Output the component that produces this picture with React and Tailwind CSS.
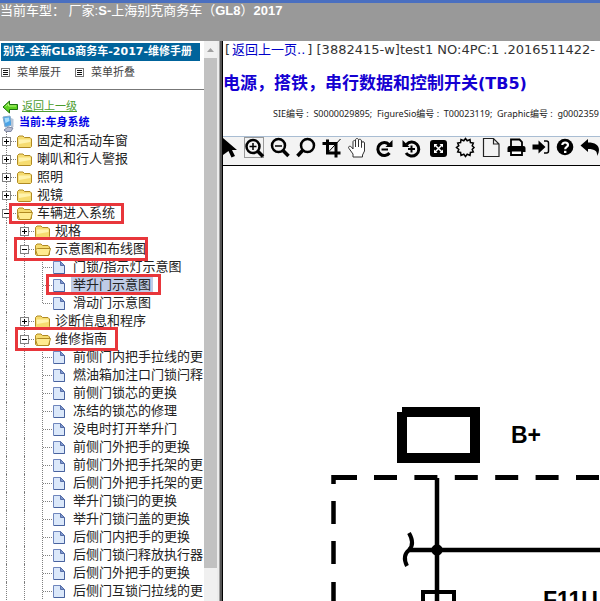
import { useState } from 'react'

const repairs = [
  '前侧门内把手拉线的更',
  '燃油箱加注口门锁闩释',
  '前侧门锁芯的更换',
  '冻结的锁芯的修理',
  '没电时打开举升门',
  '前侧门外把手的更换',
  '前侧门外把手托架的更',
  '后侧门外把手托架的更',
  '举升门锁闩的更换',
  '举升门锁闩盖的更换',
  '后侧门内把手的更换',
  '后侧门锁闩释放执行器',
  '后侧门外把手的更换',
  '后侧门互锁闩拉线的更',
]

const tree = [
  { label: '固定和活动车窗', folder: true },
  { label: '喇叭和行人警报', folder: true },
  { label: '照明', folder: true },
  { label: '视镜', folder: true },
  {
    label: '车辆进入系统',
    folder: true,
    mark: '-top-px left-[9px] h-[21px] w-[115px]',
    children: [
      { label: '规格', folder: true },
      {
        label: '示意图和布线图',
        folder: true,
        mark: '-top-[3px] left-[14px] h-6 w-[134px]',
        children: [
          { label: '门锁/指示灯示意图' },
          { label: '举升门示意图', selected: true, mark: '-top-0.5 left-[46px] h-[21px] w-[115px]' },
          { label: '滑动门示意图', last: true },
        ],
      },
      { label: '诊断信息和程序', folder: true },
      {
        label: '维修指南',
        folder: true,
        mark: '-top-[3px] left-[15px] h-6 w-[103px]',
        children: repairs.map((label) => ({ label })),
      },
    ],
  },
]

function Joint({ folder, open, last }) {
  return (
    <svg width="17" height="18" viewBox="0 0 17 18" fill="none" shapeRendering="crispEdges">
      <path d={last ? 'M6.5 0V9' : 'M6.5 0V18'} stroke="#808080" strokeDasharray="1 1" />
      <path d="M7 9.5H17" stroke="#808080" strokeDasharray="1 1" />
      {folder && (
        <>
          <rect x="2.5" y="5.5" width="8" height="8" fill="#fff" stroke="#808080" />
          <path d={open ? 'M4 9.5H9' : 'M4 9.5H9M6.5 7V12'} stroke="#000" />
        </>
      )}
    </svg>
  )
}

function FolderIcon({ open }) {
  return (
    <svg width="16" height="18" viewBox="0 0 16 18" className="shrink-0">
      <path d="M.5 14.5V5.5L2 4H6L7.5 5.5H13L14.5 7V14.5L13.5 15.5H1.5Z" fill="#f6dc70" stroke="#b08a22" />
      {open ? (
        <path d="M.5 9.5L2.5 8.5H15.5L13.5 15.5H2.5Z" fill="#ffec90" stroke="#b08a22" />
      ) : (
        <path d="M1.5 7.5H13.5V10L2 12Z" fill="#fff3ad" />
      )}
    </svg>
  )
}

function PageIcon() {
  return (
    <svg width="16" height="18" viewBox="0 0 16 18" className="shrink-0">
      <path d="M.5 3.5H7.5L11.5 7.5V15.5H.5Z" fill="#dbe8fa" stroke="#6f86bd" />
      <path d="M7.5 3.5V7.5H11.5Z" fill="#7d97cf" stroke="#566ea8" />
      <path d="M1 15.5H11.5V8" fill="none" stroke="#49639f" />
    </svg>
  )
}

function TreeNode({ node, depth }) {
  const [open, setOpen] = useState(Boolean(node.children))

  return (
    <li>
      <div className="relative flex h-[18px] items-center whitespace-nowrap">
        {Array.from({ length: depth }, (_, i) => (
          <span key={i} className="ml-1.5 h-full w-3 shrink-0 border-l border-dotted border-[#808080]" />
        ))}
        {node.folder ? (
          <button className="shrink-0" aria-label={node.label} onClick={() => setOpen(!open)}>
            <Joint folder open={open && node.children} />
          </button>
        ) : (
          <span className="shrink-0">
            <Joint last={node.last} />
          </span>
        )}
        {node.folder ? <FolderIcon open={open && node.children} /> : <PageIcon />}
        <a
          href="#"
          className={
            node.selected
              ? 'ml-0.5 bg-[#bfcbe6] px-0.5 text-[13px] leading-4 text-[#222]'
              : 'ml-1 text-[13px] leading-4 text-[#222]'
          }
        >
          {node.label}
        </a>
        {node.mark && (
          <span className={`pointer-events-none absolute z-10 border-3 border-[#e8363b] ${node.mark}`} />
        )}
      </div>
      {open && node.children && (
        <ul>
          {node.children.map((child) => (
            <TreeNode key={child.label} node={child} depth={depth + 1} />
          ))}
        </ul>
      )}
    </li>
  )
}

function MenuIcon() {
  return (
    <svg width="10" height="10" viewBox="0 0 10 10" fill="none" shapeRendering="crispEdges">
      <rect x=".5" y=".5" width="8" height="8" stroke="#777" />
      <path d="M2 2.5H7M2 4.5H7M2 6.5H7" stroke="#111" />
    </svg>
  )
}

function Sidebar() {
  return (
    <aside className="flex w-[223px] shrink-0">
      <div className="min-w-0 flex-1 overflow-hidden bg-white">
        <h1 className="mt-0.5 mr-1 ml-px h-[18px] bg-[#00639b] pl-0.5 text-[11px] leading-[18px] font-bold whitespace-nowrap text-white">
          别克-全新GL8商务车-2017-维修手册
        </h1>
        <div className="flex h-[29px] items-center gap-3.5 border-b border-[#777] pb-1 pl-px text-[11px] text-[#444]">
          <button className="flex items-center gap-1.5">
            <MenuIcon />
            菜单展开
          </button>
          <button className="flex items-center gap-1.5">
            <MenuIcon />
            菜单折叠
          </button>
        </div>
        <a href="#" className="mt-[9px] flex h-4 items-center gap-1 pl-0.5 text-[11px] text-[#4c9c2e] underline">
          <svg width="16" height="14" viewBox="0 0 16 14">
            <path d="M1 7L7.5 1V4.5H15.5V9.5H7.5V13Z" fill="#5ed321" stroke="#1f7010" />
            <path d="M3.5 6.5L6.5 3.8V6H14" fill="none" stroke="#b4f57c" />
          </svg>
          返回上一级
        </a>
        <div className="flex h-[17px] items-center gap-0.5 pl-px text-[11px] font-bold text-[#0000e6]">
          <svg width="16" height="18" viewBox="0 0 16 18">
            <path d="M2 2L9 1L11 10L4 12Z" fill="#4aa3e6" stroke="#86a9c9" />
            <path d="M3.5 3L8 2.5L8.5 6L4.5 8Z" fill="#a7dcfb" />
            <path d="M10 3L12.5 4V12L10 13Z" fill="#b9c6d6" />
            <path d="M3 15L7 12L12 13L10 16.5H5Z" fill="#b7bdd0" stroke="#8089a5" />
          </svg>
          当前:车身系统
        </div>
        <ul>
          {tree.map((node) => (
            <TreeNode key={node.label} node={node} depth={0} />
          ))}
        </ul>
      </div>
      {/* Scrollbar and frame edge */}
      <div className="flex w-[13px] flex-col items-center bg-[#f0f0f0]">
        <svg width="13" height="17" viewBox="0 0 13 17">
          <path d="M3 11L6.5 7L10 11Z" fill="#a0a0a0" />
        </svg>
        <div className="h-[510px] w-full bg-[#c1c1c1]" />
      </div>
      <div className="w-[3px] border-r border-[#a0a0a0] bg-[#ececec]" />
      <div className="w-0.5 bg-[#555]" />
      <div className="w-px bg-black" />
    </aside>
  )
}

const tools = [
  {
    name: '放大',
    icon: (
      <>
        <rect x=".5" y="-.5" width="19" height="20" stroke="#999" strokeWidth="1" />
        <circle cx="9" cy="8.5" r="6.5" />
        <path d="M13.5 13L19 18.5" strokeWidth="3.5" />
        <path d="M5.5 8.5H12.5M9 5V12" strokeWidth="1.5" />
      </>
    ),
  },
  {
    name: '缩小',
    icon: (
      <>
        <circle cx="8.5" cy="7.5" r="6.5" />
        <path d="M13 12.5L18.5 18" strokeWidth="3.5" />
        <path d="M5 8H12" strokeWidth="1.5" />
      </>
    ),
  },
  {
    name: '查看',
    icon: (
      <>
        <circle cx="11.5" cy="7.5" r="6.5" />
        <path d="M7 12L1.5 18" strokeWidth="3.5" />
      </>
    ),
  },
  {
    name: '裁剪',
    icon: (
      <>
        <path d="M5.5 1.5V15H18.5M.5 5.5H14V19.5" strokeWidth="3" />
        <path d="M5.5 15L18.5 1" strokeWidth="1" />
      </>
    ),
  },
  {
    name: '移动',
    icon: (
      <path
        d="M5 19V16L1 10.5C-.5 8.5 2 7.5 3.5 9L5 11V4C5 2 7.5 2 7.5 4V9V2C7.5 0 10.5 0 10.5 2V9V2.5C10.5 .8 13.5 .8 13.5 3V9.5V5C13.5 3.3 16.5 3.3 16.5 5V13L14.5 17V19Z"
        stroke="#333"
        strokeWidth="1"
        fill="#fff"
      />
    ),
  },
  {
    name: '顺时针旋转',
    icon: (
      <>
        <path d="M15.5 15A6.5 6.5 0 1 1 15 6.5" strokeWidth="3" />
        <path d="M11.5 9H18.5V2Z" fill="#000" stroke="none" />
        <path d="M7.5 11.5H14" strokeWidth="2" />
      </>
    ),
  },
  {
    name: '逆时针旋转',
    icon: (
      <>
        <path d="M6 15A7 7 0 1 0 6.5 6.5" strokeWidth="3" />
        <path d="M2.5 2V9H9.5Z" fill="#000" stroke="none" />
        <path d="M8 11H15M11.5 7.5V14.5" strokeWidth="2" />
      </>
    ),
  },
  {
    name: '适合窗口',
    icon: (
      <>
        <rect x="4" y="2" width="17" height="17" rx="3" fill="#000" stroke="none" />
        <path d="M9 7L16 14M16 7L9 14" stroke="#fff" strokeWidth="1.5" />
        <path d="M8 6H11.5L8 9.5ZM17 6V9.5L13.5 6ZM8 15V11.5L11.5 15ZM17 15H13.5L17 11.5Z" fill="#fff" stroke="none" />
      </>
    ),
  },
  {
    name: '亮度',
    icon: (
      <path
        d="M13.5 .5L15.2 2.8L18 1.6L18.4 4.6L21.3 5L20.2 7.7L22 9.5L20.2 11.5L21.3 14L18.4 14.4L18 17.4L15.2 16.2L13.5 18.5L11.8 16.2L9 17.4L8.6 14.4L5.7 14L6.8 11.5L4.5 9.5L6.8 7.7L5.7 5L8.6 4.6L9 1.6L11.8 2.8Z"
        strokeWidth="1.5"
      />
    ),
  },
  { name: '新建', icon: <path d="M5.5 .5H15.5L21 6V18.5H5.5ZM15.5 .5V6H21" stroke="#222" strokeWidth="1.2" /> },
  {
    name: '打印',
    icon: (
      <>
        <path d="M7 9V1.5H15.5L18 4V9" strokeWidth="1.8" />
        <path d="M3.5 14V10Q3.5 8 5.5 8H19.5Q21.5 8 21.5 10V14Z" fill="#000" stroke="none" />
        <path d="M7 12.5H18V17H7Z" fill="#fff" strokeWidth="1.8" />
      </>
    ),
  },
  {
    name: '进入',
    icon: (
      <>
        <path d="M2.5 6.5H8.5V2.5L15.5 9L8.5 15.5V11.5H2.5Z" fill="#000" stroke="none" />
        <path d="M14 3H16.5Q18.5 3 18.5 5V13Q18.5 15 16.5 15H14" strokeWidth="1.5" />
      </>
    ),
  },
  {
    name: '帮助',
    icon: (
      <>
        <circle cx="9" cy="9" r="8.3" fill="#000" stroke="none" />
        <path d="M6.3 7C6.3 3.5 12 3.8 12 7C12 9 9.2 8.8 9.2 11.3" stroke="#fff" strokeWidth="2.2" />
        <path d="M8 12.8H10.4V15H8Z" fill="#fff" stroke="none" />
      </>
    ),
  },
  {
    name: '返回',
    icon: (
      <path d="M-1.5 7.5L6 1V4.5C13 4.5 17 7 17 12Q17 15 15 18C15.5 13 13 11 6 11V14Z" fill="#000" stroke="none" />
    ),
  },
]

function Toolbar() {
  return (
    <div className="flex h-[30px] overflow-hidden border-t border-b border-t-[#a9bdd3] border-b-black bg-[#f3f3f3]">
      <button aria-label="选择" className="flex w-[18px] shrink-0 items-start pt-px">
        <svg width="18" height="20" viewBox="0 0 18 20">
          <path d="M0 0L14 12H9L12 18L8.5 19.5L5.5 13L0 17Z" />
        </svg>
      </button>
      {tools.map((tool) => (
        <button key={tool.name} aria-label={tool.name} className="flex w-[26px] shrink-0 items-start px-px pt-px">
          <svg width="24" height="20" viewBox="-2 0 24 20" fill="none" stroke="#000" strokeWidth="2.5" overflow="visible">
            {tool.icon}
          </svg>
        </button>
      ))}
    </div>
  )
}

function Diagram() {
  return (
    <svg width="377" height="435" viewBox="0 0 377 435" fill="none" stroke="#000">
      <path d="M179 241H257V297H174V246H179ZM184 251V287H247V251Z" fill="#000" fillRule="evenodd" stroke="none" />
      <g fill="#000" stroke="none" fontFamily="Liberation Sans, Arial, sans-serif" fontWeight="700" fontSize="23">
        <text x="288" y="277">B+</text>
        <text x="320" y="442">F11U</text>
      </g>
      <path d="M151 311.5H377" strokeWidth="5" strokeDasharray="23 17.4" />
      <path d="M109 311.5H134" strokeWidth="5" />
      <path d="M110.5 309V318M110.5 335V358M110.5 375V398M110.5 416V435" strokeWidth="4.5" />
      <path d="M214 312V435M186 384H377" strokeWidth="4.5" />
      <circle cx="214" cy="384" r="5.7" fill="#000" stroke="none" />
      <path d="M186 367C190 374 190 380 186 384C181 388 181 394 184 400" strokeWidth="4" />
      <path d="M200 435V426H231V435" strokeWidth="4" />
    </svg>
  )
}

export default function App() {
  return (
    <div className="flex h-screen flex-col overflow-hidden bg-white font-['DejaVu_Sans','Noto_Sans_CJK_SC',sans-serif]">
      <header className="h-[41px] shrink-0 border-t-3 border-[#4a6fc0] bg-[#999] font-['Liberation_Sans','Noto_Sans_CJK_SC',sans-serif] text-[13px] leading-4 whitespace-nowrap text-white">
        当前车型： 厂家:<b>S-</b>上海别克商务车（<b>GL8</b>）<b>2017</b>
      </header>
      <div className="flex min-h-0 flex-1">
        <Sidebar />
        <main className="flex min-w-0 flex-1 flex-col overflow-hidden">
          <div className="h-[95px] shrink-0 whitespace-nowrap">
            <p className="h-[18px] pl-0.5 text-[13px] leading-[18px] text-[#333]">
              [
              <a href="#" className="px-0.5 text-[#0000c8]">
                返回上一页..
              </a>
              ] [3882415-w]test1 NO:4PC:1 .2016511422-
            </p>
            <h2 className="mt-3 text-[17px] leading-6 font-bold text-[#1400d2]">
              电源，搭铁，串行数据和控制开关<span className="text-base">(TB5)</span>
            </h2>
            <p className="mt-3 pl-[50px] font-['Noto_Sans','Noto_Sans_CJK_SC',sans-serif] text-[9px] leading-3 text-[#222]">
              SIE编号 :&nbsp; S0000029895;&nbsp; FigureSio编号 :&nbsp; T00023119;&nbsp; Graphic编号 :&nbsp; g0002359
            </p>
          </div>
          <Toolbar />
          <Diagram />
        </main>
      </div>
    </div>
  )
}
